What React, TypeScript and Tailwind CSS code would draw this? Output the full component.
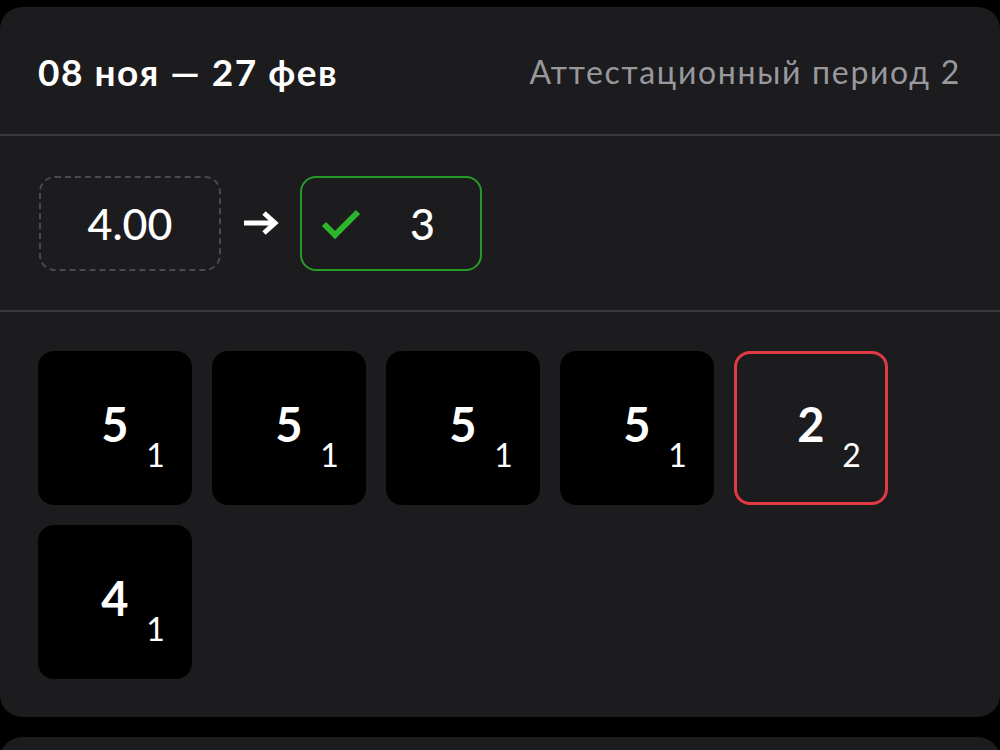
import React from "react";

const grades = [
  { v: "5", w: "1" },
  { v: "5", w: "1" },
  { v: "5", w: "1" },
  { v: "5", w: "1" },
  { v: "2", w: "2", bad: true },
  { v: "4", w: "1" },
];

export default function App() {
  return (
    <div
      className="w-[1000px] h-[750px] bg-black overflow-hidden pt-[7px] flex flex-col gap-[20px]"
      style={{ fontFamily: "Lato, 'Noto Sans', sans-serif" }}
    >
      <div className="bg-[#1c1c1e] rounded-[22px] flex flex-col shrink-0">
        <div className="h-[129px] flex items-center justify-between px-[38px] border-b-2 border-[#38383a]">
          <div className="text-white font-bold text-[37px] leading-none tracking-[1.5px] pt-[2px]">08 ноя — 27 фев</div>
          <div className="text-[#98989d] text-[32px] leading-none pt-[2px] tracking-[1.7px] mr-[1px]">Аттестационный период 2</div>
        </div>
        <div className="h-[176px] flex items-center px-[39px] border-b-2 border-[#38383a]">
          <div className="w-[182px] h-[95px] rounded-[16px] border-2 border-dashed border-[#4a4a4d] flex items-center justify-center text-white font-medium text-[43px] leading-none">
            4.00
          </div>
          <div className="w-[79px] flex items-center justify-center">
            <svg width="40" height="28" viewBox="0 0 40 28">
              <path d="M3 14 H34 M23 4 L34 14 L23 24" stroke="white" strokeWidth="5" fill="none" strokeLinecap="butt" strokeLinejoin="miter" />
            </svg>
          </div>
          <div className="w-[182px] h-[95px] rounded-[16px] border-2 border-[#279b27] flex items-center pl-[19px] text-white font-medium text-[43px] leading-none">
            <svg width="40" height="32" viewBox="0 0 40 32">
              <path d="M3 17 L14 28 L37 5" stroke="#2db52d" strokeWidth="6" fill="none" />
            </svg>
            <span className="ml-[49px]">3</span>
          </div>
        </div>
        <div className="px-[38px] pt-[39px] pb-[38px] grid grid-cols-[repeat(5,154px)] gap-[20px]">
          {grades.map((g, i) => (
            <div
              key={i}
              className={
                g.bad
                  ? "w-[154px] h-[154px] rounded-[16px] border-[3px] border-[#e03a45] bg-[#1c1c1e] flex items-center justify-center"
                  : "w-[154px] h-[154px] rounded-[16px] bg-black flex items-center justify-center"
              }
            >
              <span className="relative text-white font-bold text-[47px] leading-none -mt-[8px]">
                {g.v}
                <span className="absolute left-[45px] top-[38px] font-normal text-[32px] leading-none">{g.w}</span>
              </span>
            </div>
          ))}
        </div>
      </div>
      <div className="bg-[#1c1c1e] rounded-[22px] h-[200px] shrink-0" />
    </div>
  );
}
